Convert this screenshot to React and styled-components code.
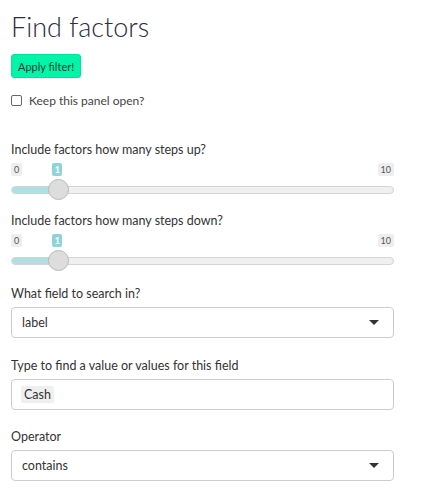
import styled, { createGlobalStyle } from 'styled-components';

const GlobalStyle = createGlobalStyle`
body {
  margin : 0 ;
  background : #ffffff ;
  font-family : "Lato", "Open Sans", sans-serif ;
  color : #333333 ;
}
`;

const Panel = styled.div`
width : 383px ;
padding : 9px 0px 0px 11px ;
display : flex ;
flex-direction : column ;
`;
const Title = styled.h1`
margin : 0px 0px 9px 0px ;
font-size : 27px ;
font-weight : 300 ;
line-height : 36px ;
color : #2b2d42 ;
`;
const ApplyButton = styled.button`
align-self : flex-start ;
height : 24px ;
padding : 0px 6px ;
background : #00f5a8 ;
border : 1px solid #00e39b ;
border-radius : 3px ;
font-family : inherit ;
font-size : 11px ;
color : #1f3a35 ;
`;
const CheckRow = styled.label`
display : flex ;
align-items : center ;
gap : 7px ;
margin : 15px 0px 0px 0px ;
font-size : 12px ;
color : #444 ;
`;
const Box = styled.span`
width : 9px ;
height : 9px ;
border : 1px solid #666 ;
border-radius : 2px ;
`;
const Field = styled.div`
display : flex ;
flex-direction : column ;
margin-top : ${p => p.gap}px ;
`;
const Label = styled.div`
font-size : 12.5px ;
color : #333 ;
line-height : 16px ;
margin-bottom : ${p => p.mb}px ;
`;
const Ticks = styled.div`
display : flex ;
justify-content : space-between ;
position : relative ;
height : 14px ;
`;
const Tick = styled.span`
background : #eeeeee ;
border-radius : 2px ;
padding : 1px 3px ;
font-size : 9px ;
line-height : 11px ;
color : #555 ;
height : 11px ;
`;
const ValueTag = styled.span`
position : absolute ;
top : 0px ;
width : 10px ;
height : 13px ;
margin-left : -5px ;
background : #8fd3d8 ;
border-radius : 2px ;
font-size : 9px ;
font-weight : 700 ;
color : #ffffff ;
text-align : center ;
line-height : 13px ;
`;
const Track = styled.div`
position : relative ;
height : 6px ;
margin-top : 9px ;
background : #f0f0f0 ;
border : 1px solid #d4d4d4 ;
border-radius : 4px ;
`;
const Fill = styled.div`
height : 100% ;
background : #aee0e3 ;
border-radius : 4px 0px 0px 4px ;
`;
const Handle = styled.div`
position : absolute ;
top : -8px ;
width : 19px ;
height : 19px ;
margin-left : -10px ;
border-radius : 50% ;
background : #dddddd ;
border : 1px solid #b8b8b8 ;
`;
const InputBox = styled.div`
height : 29px ;
border : 1px solid #cccccc ;
border-radius : 4px ;
display : flex ;
align-items : center ;
justify-content : space-between ;
padding : 0px 14px 0px 10px ;
font-size : 12.5px ;
color : #333 ;
`;
const Caret = styled.span`
width : 0 ;
height : 0 ;
border-left : 5px solid transparent ;
border-right : 5px solid transparent ;
border-top : 5px solid #333 ;
`;
const Chip = styled.span`
background : #efefef ;
border-radius : 2px ;
padding : 1px 3px ;
margin-left : -1px ;
`;

const Slider = ({ label, value, max, gap }) => {
    const pos = `calc(10px + (100% - 20px) * ${value / max})`;
    return (
        <Field gap={gap}>
            <Label mb={5}>{label}</Label>
            <Ticks>
                <Tick>0</Tick>
                <ValueTag style={{ left: pos }}>{value}</ValueTag>
                <Tick>{max}</Tick>
            </Ticks>
            <Track>
                <Fill style={{ width: pos }} />
                <Handle style={{ left: pos }} />
            </Track>
        </Field>
    )
}

const App = () => {
    return (
        <Panel>
            <GlobalStyle />
            <Title>Find factors</Title>
            <ApplyButton>Apply filter!</ApplyButton>
            <CheckRow><Box />Keep this panel open?</CheckRow>
            <Slider label="Include factors how many steps up?" value={1} max={10} gap={34} />
            <Slider label="Include factors how many steps down?" value={1} max={10} gap={19} />
            <Field gap={21}>
                <Label mb={5}>What field to search in?</Label>
                <InputBox>label<Caret /></InputBox>
            </Field>
            <Field gap={20}>
                <Label mb={5}>Type to find a value or values for this field</Label>
                <InputBox><Chip>Cash</Chip></InputBox>
            </Field>
            <Field gap={19}>
                <Label mb={5}>Operator</Label>
                <InputBox>contains<Caret /></InputBox>
            </Field>
        </Panel>
    )
}

export default App
